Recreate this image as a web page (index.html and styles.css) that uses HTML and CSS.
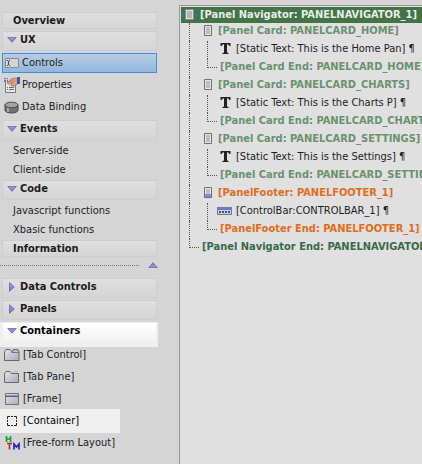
FILE: index.html
```html
<!DOCTYPE html>
<html lang="en">
<head>
<meta charset="utf-8">
<title>UX Builder</title>
<link rel="stylesheet" href="styles.css">
</head>
<body>
<svg class="defs" aria-hidden="true">
  <defs>
    <linearGradient id="tri" x1="0" y1="0" x2="0" y2="1"><stop offset="0" stop-color="#a0a0e2"/><stop offset="1" stop-color="#7373bd"/></linearGradient>
    <linearGradient id="metal" x1="0" y1="0" x2="1" y2="1"><stop offset="0" stop-color="#e2e2e6"/><stop offset="1" stop-color="#acacb8"/></linearGradient>
    <symbol id="down" viewBox="0 0 10 6"><path d="M.7.5h8.6L5 5.3z" fill="url(#tri)" stroke="#6a6aa8" stroke-width=".8"/></symbol>
    <symbol id="right" viewBox="0 0 6 10"><path d="M.5.7v8.6L5.3 5z" fill="url(#tri)" stroke="#6a6aa8" stroke-width=".8"/></symbol>
    <symbol id="card" viewBox="0 0 8 11"><path d="M.5.5h7v10h-7z" fill="#e6e6e6" stroke="#707070"/><path d="M2 2h4v7H2z" fill="#bdbdbd"/></symbol>
    <symbol id="text" viewBox="0 0 11 11"><path d="M.5 0h10v3H9.300Q9 1.300 7 1.300V9q0 1 1.500 1v1h-6v-1Q4 10 4 9V1.300Q2 1.300 1.700 3H.5z" fill="#222"/></symbol>
  </defs>
</svg>
<div class="app">
  <nav class="sidebar">
    <a class="head plain" href="#overview">Overview</a>
    <button class="head"><svg class="down"><use href="#down"/></svg>UX</button>
    <ul class="items">
      <li><a class="item selected" href="#controls"><svg class="icon" viewBox="0 0 16 16"><path d="M1.500 3.500h13v9h-13z" fill="#d3d3d3" stroke="#8c8c8c"/><path d="M3 5.500h1m1 0h1M3 10.500h1m1 0h1M4.500 6v4" stroke="#444" fill="none"/></svg>Controls</a></li>
      <li><a class="item" href="#properties"><svg class="icon" viewBox="0 0 16 16"><path d="M1.500 4.500h10v11h-10z" fill="#e4e6ea" stroke="#777b86"/><path d="M0 1h4v4H0z" fill="#6477b7"/><path d="M0 2.500h4M2.500 1v4" stroke="#bcc6ea"/><path d="M3 10.500h1m1 0h5M3 12.500h1m1 0h5" stroke="#666b78"/><path d="M3 6l4-4 4-1 3 .5v5L11 9H7l1-2H4z" fill="#dba184" stroke="#a66a50" stroke-width=".7"/><path d="M5 5l4-2M7 6l3-1" stroke="#a66a50" stroke-width=".6"/><path d="M13 0h3v7h-3z" fill="#4457a5"/></svg>Properties</a></li>
      <li><a class="item" href="#data"><svg class="icon" viewBox="0 0 16 16"><path d="M1 6v5c0 4 13 4 13 0V6z" fill="#737373" stroke="#444"/><path d="M4 8v5" stroke="#aaa" stroke-width="2"/><ellipse cx="7.500" cy="6" rx="6.500" ry="2.800" fill="#a5a5a5" stroke="#4b4b4b"/></svg>Data Binding</a></li>
    </ul>
    <button class="head"><svg class="down"><use href="#down"/></svg>Events</button>
    <ul class="items links">
      <li><a class="item" href="#server">Server-side</a></li>
      <li><a class="item" href="#client">Client-side</a></li>
    </ul>
    <button class="head"><svg class="down"><use href="#down"/></svg>Code</button>
    <ul class="items links">
      <li><a class="item" href="#js">Javascript functions</a></li>
      <li><a class="item" href="#xbasic">Xbasic functions</a></li>
    </ul>
    <a class="head plain" href="#information">Information</a>
    <div class="splitter"><span class="dots"></span><button class="collapse" aria-label="Collapse"><svg class="down up"><use href="#down"/></svg></button></div>
    <button class="head"><svg class="right"><use href="#right"/></svg>Data Controls</button>
    <button class="head"><svg class="right"><use href="#right"/></svg>Panels</button>
    <div class="spot"><button class="head lit"><svg class="down"><use href="#down"/></svg>Containers</button></div>
    <ul class="items palette">
      <li><button class="item"><svg class="icon" viewBox="0 0 16 16"><path d="M.5 13.500v-9l1.500-2h4l1.500 2h1l1-2h4l1.500 2v9z" fill="url(#metal)" stroke="#666673"/><path d="M7.500 5.500h7" stroke="#777784"/><path d="M8.500 4.500l1.200-2h3.500l1.300 2" fill="#bbbbc5" stroke="#666673"/></svg>[Tab Control]</button></li>
      <li><button class="item"><svg class="icon" viewBox="0 0 16 16"><path d="M9 4.500l1-2h3l1 2" fill="none" stroke="#b9b9c2"/><path d="M.5 13.500v-9l1.500-2h4l1.500 2h7v9z" fill="url(#metal)" stroke="#666673"/></svg>[Tab Pane]</button></li>
      <li><button class="item"><svg class="icon" viewBox="0 0 16 16"><path d="M1.500 2.500h13v11h-13z" fill="url(#metal)" stroke="#70707d"/><path d="M2 4.500h12" stroke="#9a9aa8"/><path d="M2 5.500h12" stroke="#5e5e6b"/></svg>[Frame]</button></li>
      <li class="marked"><button class="item"><svg class="icon" viewBox="0 0 16 16"><path d="M3.500 6V3.500h2.500M7 3.500h2M10 3.500H12.500V6M12.500 7v2M12.500 10V12.500H10M9 12.500H7M6 12.500H3.500V10M3.500 9V7" fill="none" stroke="#222"/></svg>[Container]</button></li>
      <li><button class="item"><svg class="icon" viewBox="0 0 16 16"><path d="M2.500 1v6M6.500 1v6M2 4h5" fill="none" stroke="#189b27" stroke-width="1.600"/><path d="M3 8.500h5M5.500 8v6.500" stroke="#b92a2a" stroke-width="1.600"/><path d="M10 14.500V9l2.500 3L15 9v5.500" fill="none" stroke="#2525b5" stroke-width="1.700"/></svg>[Free-form Layout]</button></li>
    </ul>
  </nav>
  <main class="panel">
    <ul class="tree">
      <li class="row root"><span class="slot"><svg class="nav" viewBox="0 0 17 12"><path d="M3 3v6L0 6zM14 3v6l3-3z" fill="#2878b8"/><path d="M4.500.5h8v10h-8z" fill="#ddd" stroke="#8a8a8a"/><path d="M6 2h5v7H6z" fill="#b4b4b4"/></svg></span>[Panel Navigator: PANELNAVIGATOR_1]</li>
      <li class="row card"><i class="guide"></i><span class="slot"><svg class="device"><use href="#card"/></svg></span>[Panel Card: PANELCARD_HOME]</li>
      <li class="row"><i class="guide"></i><i class="guide"></i><span class="slot"><svg class="tee"><use href="#text"/></svg></span>[Static Text: This is the Home Pan] ¶</li>
      <li class="row card"><i class="guide"></i><i class="guide corner"></i><span class="end">[Panel Card End: PANELCARD_HOME]</span></li>
      <li class="row card"><i class="guide"></i><span class="slot"><svg class="device"><use href="#card"/></svg></span>[Panel Card: PANELCARD_CHARTS]</li>
      <li class="row"><i class="guide"></i><i class="guide"></i><span class="slot"><svg class="tee"><use href="#text"/></svg></span>[Static Text: This is the Charts P] ¶</li>
      <li class="row card"><i class="guide"></i><i class="guide corner"></i><span class="end">[Panel Card End: PANELCARD_CHARTS]</span></li>
      <li class="row card"><i class="guide"></i><span class="slot"><svg class="device"><use href="#card"/></svg></span>[Panel Card: PANELCARD_SETTINGS]</li>
      <li class="row"><i class="guide"></i><i class="guide"></i><span class="slot"><svg class="tee"><use href="#text"/></svg></span>[Static Text: This is the Settings] ¶</li>
      <li class="row card"><i class="guide"></i><i class="guide corner"></i><span class="end">[Panel Card End: PANELCARD_SETTINGS]</span></li>
      <li class="row footer"><i class="guide"></i><span class="slot"><svg class="device" viewBox="0 0 8 11"><use href="#card" width="8" height="11"/><path d="M1 7h6v3H1z" fill="#6f96d6"/></svg></span>[PanelFooter: PANELFOOTER_1]</li>
      <li class="row"><i class="guide"></i><i class="guide"></i><span class="slot wide"><svg class="bar" viewBox="0 0 15 8"><path d="M.5.5h14v7H.5z" fill="#c9cfe0" stroke="#6a74a0"/><path d="M0 0h15v3H0z" fill="#6c7bc2"/><path d="M2 5h2M5 5h2M8 5h2M11 5h2" stroke="#555" stroke-width="2"/></svg></span>[ControlBar:CONTROLBAR_1] ¶</li>
      <li class="row footer"><i class="guide"></i><i class="guide corner"></i><span class="end">[PanelFooter End: PANELFOOTER_1] ¶</span></li>
      <li class="row closing"><i class="guide corner"></i><span class="end">[Panel Navigator End: PANELNAVIGATOR_1]</span></li>
    </ul>
  </main>
</div>
</body>
</html>
```
FILE: styles.css
```css
* { box-sizing: border-box; }
body {
  margin: 0;
  background: #d5d5d5;
  color: #1c1c24;
  font: 11px/16px "DejaVu Sans Condensed", "DejaVu Sans", sans-serif;
}
ul { list-style: none; margin: 0; padding: 0; }
a { color: inherit; text-decoration: none; }
button { font: inherit; color: inherit; background: none; border: 0; padding: 0; text-align: left; }
svg { display: block; flex: none; }
.defs { position: absolute; width: 0; height: 0; }
.app { display: grid; grid-template-columns: 179px 1fr; min-height: 100vh; }

.sidebar { padding: 12px 21px 0 0; }
.head {
  display: flex;
  align-items: center;
  height: 20px;
  margin: 0 1px 2px 2px;
  padding: 0 4px 2px;
  border: 1px solid #cecece;
  background: linear-gradient(#dfdfdf, #d5d5d5);
  color: #1c1c1c;
  font-weight: bold;
}
button.head { width: calc(100% - 3px); }
.plain { height: 17px; padding: 0 10px; }
.down { width: 10px; height: 6px; margin-right: 3px; }
.right { width: 6px; height: 10px; margin: 0 5px 0 2px; }
.up { transform: rotate(180deg); margin: 0; }

.items { margin-bottom: 3px; }
.item {
  display: flex;
  align-items: center;
  height: 20px;
  margin: 0 1px 2px 2px;
  padding: 0 2px;
  white-space: nowrap;
}
.items li:last-child .item { margin-bottom: 0; }
.selected {
  padding: 0 1px;
  border: 1px solid #418fdc;
  background: linear-gradient(#b7cce3, #92b7dc);
}
.icon { width: 16px; height: 16px; margin-right: 2px; }
.links { margin-bottom: 0; }
.links .item { height: 19px; margin: 0 0 0 2px; padding: 0 11px 2px; }
.splitter { display: flex; align-items: center; height: 12px; margin: 1px 0 7px; }
.dots { flex: 1; margin-right: 9px; border-top: 1px dotted #777; }
.spot { margin-bottom: -3px; padding-bottom: 5px; background: #f0f0f0; }
.lit { margin-bottom: 0; border-color: #eee; background: linear-gradient(#fff, #f2f2f2); color: #000; }
.palette li { display: flex; height: 22px; align-items: center; }
.palette .item { margin: 0 0 0 2px; }
.palette .icon { margin-right: 3px; }
.palette .marked { width: 120px; height: 24px; margin: -1px 0; background: #f0f0f0; color: #000; }

.panel { margin-top: 5px; padding-top: 1px; border: solid #979797; border-width: 1px 0 0 1px; background: #e0e0e0; overflow: hidden; min-width: 0; }
.tree { padding-left: 1px; }
.row { display: flex; height: 18px; line-height: 15px; color: #1c1c1c; white-space: nowrap; }
.root { height: 16px; background: #437346; color: #e8ede8; }
.root, .card, .footer, .closing { font-weight: bold; }
.card { color: #6b916f; }
.footer { color: #e06c20; }
.closing { color: #3a6948; }
.guide { flex: none; width: 10px; margin-left: 8px; border-left: 1px dotted #555; }
.corner { height: 9px; border-bottom: 1px dotted #555; }
.slot { flex: none; display: flex; justify-content: center; align-items: center; width: 19px; height: 15px; }
.slot svg { margin-right: 2px; }
.slot.wide svg { margin-right: 4px; }
.end { padding-left: 3px; }
.nav { width: 17px; height: 12px; }
.device { width: 8px; height: 11px; }
.tee { width: 11px; height: 11px; }
.bar { width: 15px; height: 8px; }
```
